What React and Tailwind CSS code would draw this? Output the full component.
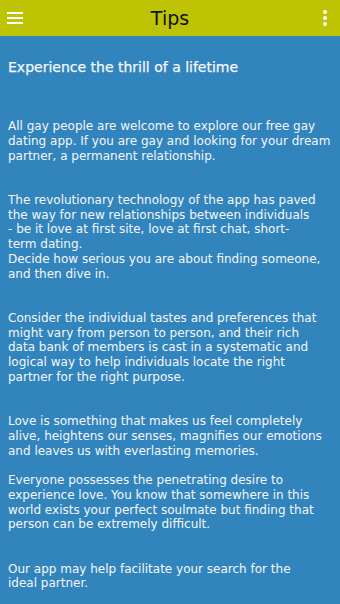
const paragraphs = [
  {
    gap: "mt-[43px]",
    lines: [
      "All gay people are welcome to explore our free gay",
      "dating app. If you are gay and looking for your dream",
      "partner, a permanent relationship.",
    ],
  },
  {
    gap: "mt-[29.5px]",
    lines: [
      "The revolutionary technology of the app has paved",
      "the way for new relationships between individuals",
      "- be it love at first site, love at first chat, short-",
      "term dating.",
      "Decide how serious you are about finding someone,",
      "and then dive in.",
    ],
  },
  {
    gap: "mt-[29.5px]",
    lines: [
      "Consider the individual tastes and preferences that",
      "might vary from person to person, and their rich",
      "data bank of members is cast in a systematic and",
      "logical way to help individuals locate the right",
      "partner for the right purpose.",
    ],
  },
  {
    gap: "mt-[29.5px]",
    lines: [
      "Love is something that makes us feel completely",
      "alive, heightens our senses, magnifies our emotions",
      "and leaves us with everlasting memories.",
    ],
  },
  {
    gap: "mt-[14.75px]",
    lines: [
      "Everyone possesses the penetrating desire to",
      "experience love. You know that somewhere in this",
      "world exists your perfect soulmate but finding that",
      "person can be extremely difficult.",
    ],
  },
  {
    gap: "mt-[29.5px]",
    lines: ["Our app may help facilitate your search for the", "ideal partner."],
  },
];

const Header = () => (
  <div className="h-9 bg-[#bec404] flex items-center justify-between px-[7px] shrink-0">
    <button className="w-4 flex flex-col gap-[3px]">
      <span className="h-[2px] bg-white block" />
      <span className="h-[2px] bg-white block" />
      <span className="h-[2px] bg-white block" />
    </button>
    <h1 className="text-[19px] text-[#111] leading-none">Tips</h1>
    <button className="w-4 flex flex-col items-center gap-[2px]">
      <span className="w-1 h-1 rounded-full bg-white block" />
      <span className="w-1 h-1 rounded-full bg-white block" />
      <span className="w-1 h-1 rounded-full bg-white block" />
    </button>
  </div>
);

export default function App() {
  return (
    <div className="w-[340px] h-[604px] flex flex-col bg-[#3284bc] overflow-hidden font-['DejaVu_Sans',Verdana,sans-serif] text-white">
      <Header />
      <main className="px-2 pt-[22px]">
        <h2 className="text-[14px] leading-[18px] text-[#f4f7fa] [-webkit-text-stroke:0.25px_#f4f7fa]">
          Experience the thrill of a lifetime
        </h2>
        {paragraphs.map((p, i) => (
          <p key={i} className={`${p.gap} text-[12px] leading-[14.75px] text-[#f4f7fa] whitespace-nowrap`}>
            {p.lines.map((l, j) => (
              <span key={j} className="block">
                {l}
              </span>
            ))}
          </p>
        ))}
      </main>
    </div>
  );
}
